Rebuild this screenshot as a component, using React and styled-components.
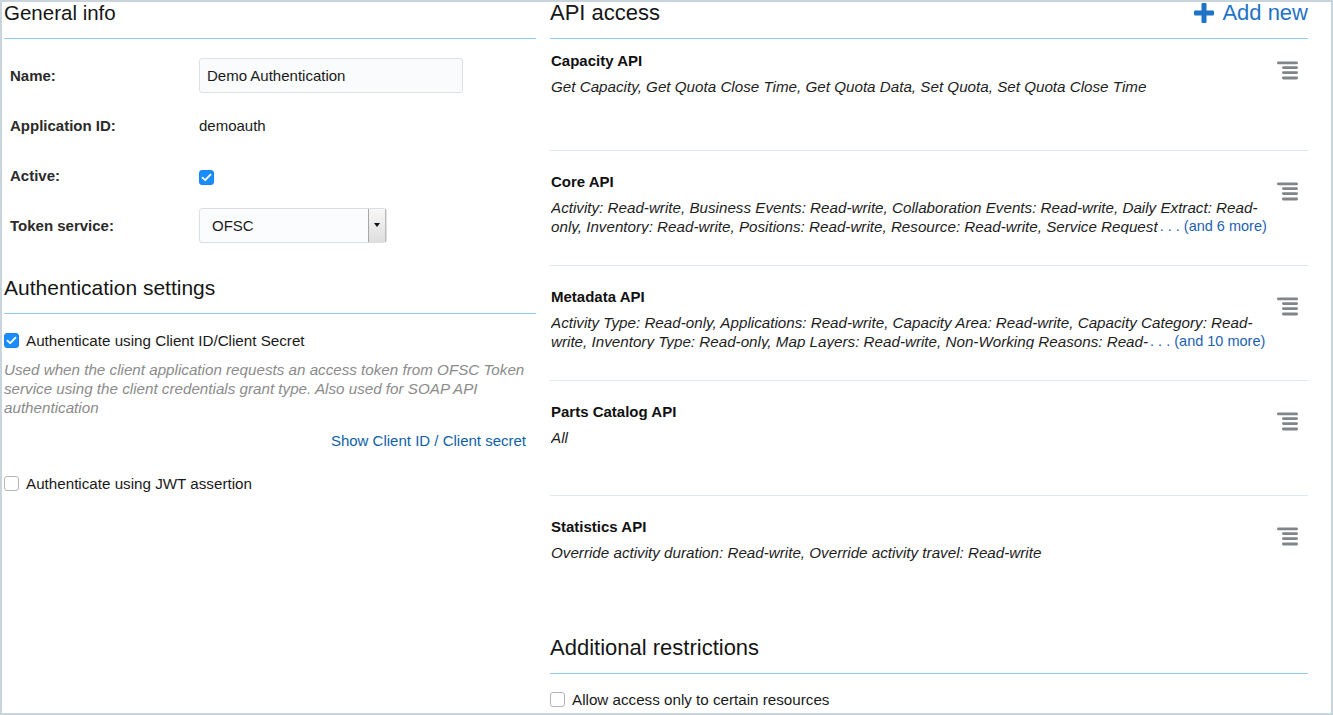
import React from 'react'
import styled, { createGlobalStyle } from 'styled-components'

const GlobalStyle = createGlobalStyle`
  body {
    margin: 0;
    background: #fff;
    font-family: "Liberation Sans", Arial, sans-serif;
    color: #1a1a1a;
  }
`

const apis = [
  {
    title: 'Capacity API',
    lines: ['Get Capacity, Get Quota Close Time, Get Quota Data, Set Quota, Set Quota Close Time'],
  },
  {
    title: 'Core API',
    lines: [
      'Activity: Read-write, Business Events: Read-write, Collaboration Events: Read-write, Daily Extract: Read-',
      'only, Inventory: Read-write, Positions: Read-write, Resource: Read-write, Service Request',
    ],
    more: 6,
  },
  {
    title: 'Metadata API',
    lines: [
      'Activity Type: Read-only, Applications: Read-write, Capacity Area: Read-write, Capacity Category: Read-',
      'write, Inventory Type: Read-only, Map Layers: Read-write, Non-Working Reasons: Read-',
    ],
    more: 10,
  },
  { title: 'Parts Catalog API', lines: ['All'] },
  {
    title: 'Statistics API',
    lines: ['Override activity duration: Read-write, Override activity travel: Read-write'],
  },
]

const CheckIcon = () => (
  <svg width="11" height="9" viewBox="0 0 11 9">
    <path d="M1.5 4.6 L4.2 7.2 L9.5 1.6" fill="none" stroke="#fff" strokeWidth="1.8" strokeLinecap="round" strokeLinejoin="round" />
  </svg>
)

const MenuIcon = () => (
  <svg width="21" height="19" viewBox="0 0 21 19">
    <rect x="0" y="0.5" width="21" height="2.8" rx="1.4" fill="#7f8589" />
    <rect x="5" y="5.2" width="16" height="2.8" rx="1.4" fill="#7f8589" />
    <rect x="5" y="10.2" width="16" height="2.8" rx="1.4" fill="#7f8589" />
    <rect x="5" y="15.4" width="16" height="3" rx="1.4" fill="#7f8589" />
  </svg>
)

const PlusIcon = () => (
  <svg width="20" height="20" viewBox="0 0 20 20">
    <rect x="7.5" y="0" width="5" height="20" rx="1" fill="#1f73c6" />
    <rect x="0" y="7.5" width="20" height="5" rx="1" fill="#1f73c6" />
  </svg>
)

const App = () => {
  return (
    <Frame>
      <GlobalStyle />
      <LeftCol>
        <SectionHeader>
          <SectionTitle $size="20.5px">General info</SectionTitle>
        </SectionHeader>
        <FormGrid>
          <Label>Name:</Label>
          <TextInput readOnly value="Demo Authentication" />
          <Label>Application ID:</Label>
          <Value>demoauth</Value>
          <Label>Active:</Label>
          <div>
            <Checkbox $checked $offset="6px"><CheckIcon /></Checkbox>
          </div>
          <Label>Token service:</Label>
          <Select>
            <SelectText>OFSC</SelectText>
            <SelectButton><Caret /></SelectButton>
          </Select>
        </FormGrid>

        <SectionHeader $top="27px">
          <SectionTitle $size="21px">Authentication settings</SectionTitle>
        </SectionHeader>
        <CheckRow $top="16px">
          <Checkbox $checked><CheckIcon /></Checkbox>
          Authenticate using Client ID/Client Secret
        </CheckRow>
        <Hint>
          Used when the client application requests an access token from OFSC Token
          service using the client credentials grant type. Also used for SOAP API
          authentication
        </Hint>
        <LinkRow>
          <Link>Show Client ID / Client secret</Link>
        </LinkRow>
        <CheckRow $top="22px">
          <Checkbox />
          Authenticate using JWT assertion
        </CheckRow>
      </LeftCol>

      <RightCol>
        <SectionHeader>
          <SectionTitle $size="22px">API access</SectionTitle>
          <AddNew>
            <PlusIcon />
            Add new
          </AddNew>
        </SectionHeader>
        <CardList>
          {apis.map(api => (
            <Card key={api.title}>
              <CardBody>
                <CardTitle>{api.title}</CardTitle>
                <Desc>
                  {api.lines.map((line, i) =>
                    api.more && i === api.lines.length - 1 ? (
                      <DescLine key={i}>
                        <Clipped>{line}</Clipped>
                        <More>. . . (and {api.more} more)</More>
                      </DescLine>
                    ) : (
                      <DescLine key={i}>{line}</DescLine>
                    )
                  )}
                </Desc>
              </CardBody>
              <MenuButton><MenuIcon /></MenuButton>
            </Card>
          ))}
        </CardList>

        <SectionHeader $top="26px">
          <SectionTitle $size="22px">Additional restrictions</SectionTitle>
        </SectionHeader>
        <CheckRow $top="15px" $size="15.2px">
          <Checkbox />
          Allow access only to certain resources
        </CheckRow>
      </RightCol>
    </Frame>
  )
}

const Frame = styled.div`
  width: 1333px;
  height: 715px;
  box-sizing: border-box;
  border: 2px solid #c8d5dd;
  padding: 0 23px 0 2px;
  display: flex;
  gap: 14px;
  overflow: hidden;
  background: #fff;
`

const LeftCol = styled.div`
  width: 532px;
  flex: none;
  display: flex;
  flex-direction: column;
`

const RightCol = styled.div`
  flex: 1;
  min-width: 0;
  display: flex;
  flex-direction: column;
`

const SectionHeader = styled.div`
  display: flex;
  justify-content: space-between;
  align-items: flex-start;
  height: 37px;
  box-sizing: border-box;
  border-bottom: 1px solid #8fcbf3;
  margin-top: ${p => p.$top || '0'};
  flex: none;
`

const SectionTitle = styled.h2`
  margin: 0;
  font-size: ${p => p.$size};
  font-weight: 400;
  line-height: 20px;
  color: #161616;
  padding-top: 1px;
`

const AddNew = styled.div`
  display: flex;
  align-items: center;
  gap: 8px;
  color: #1f73c6;
  font-size: 22px;
  line-height: 22px;
  cursor: pointer;
`

const FormGrid = styled.div`
  display: grid;
  grid-template-columns: 189px 1fr;
  grid-auto-rows: 50px;
  align-items: center;
  padding: 11px 0 0 6px;
`

const Label = styled.div`
  font-size: 15px;
  font-weight: 700;
  color: #2b2b2b;
`

const Value = styled.div`
  font-size: 15px;
  color: #1a1a1a;
`

const TextInput = styled.input`
  width: 264px;
  height: 35px;
  box-sizing: border-box;
  border: 1px solid #dce2e6;
  border-radius: 3px;
  background: #f9fbfc;
  padding: 0 7px;
  font-family: inherit;
  font-size: 15px;
  color: #1a1a1a;
  outline: none;
`

const Select = styled.div`
  width: 188px;
  height: 35px;
  box-sizing: border-box;
  border: 1px solid #d9dfe3;
  border-radius: 3px;
  background: #fafcfd;
  display: flex;
`

const SelectText = styled.div`
  flex: 1;
  padding-left: 12px;
  line-height: 33px;
  font-size: 15px;
  color: #1a1a1a;
`

const SelectButton = styled.div`
  width: 16px;
  border-left: 1px solid #a6a6a6;
  border-right: 1px solid #bdbdbd;
  background: linear-gradient(#f7f7f7, #dedede);
  display: flex;
  align-items: center;
  justify-content: center;
`

const Caret = styled.span`
  width: 0;
  height: 0;
  border-left: 3.5px solid transparent;
  border-right: 3.5px solid transparent;
  border-top: 4px solid #111;
`

const Checkbox = styled.span`
  width: 15px;
  height: 15px;
  box-sizing: border-box;
  flex: none;
  border-radius: 3px;
  display: inline-flex;
  align-items: center;
  justify-content: center;
  margin-top: ${p => p.$offset || '0'};
  background: ${p => (p.$checked ? '#1b8cfb' : '#fff')};
  border: 1px solid ${p => (p.$checked ? '#1a84ee' : '#b4b4b4')};
`

const CheckRow = styled.div`
  display: flex;
  align-items: center;
  gap: 7px;
  height: 20px;
  font-size: ${p => p.$size || '15.2px'};
  color: #1a1a1a;
  margin-top: ${p => p.$top || '0'};
`

const Hint = styled.div`
  margin-top: 10px;
  font-size: 15.2px;
  font-style: italic;
  line-height: 19px;
  color: #8b8b8b;
`

const LinkRow = styled.div`
  margin-top: 14px;
  padding-right: 10px;
  text-align: right;
  line-height: 20px;
`

const Link = styled.a`
  color: #105fa9;
  font-size: 15px;
  cursor: pointer;
`

const CardList = styled.div`
  display: flex;
  flex-direction: column;
`

const Card = styled.div`
  display: flex;
  justify-content: space-between;
  height: 115px;
  box-sizing: border-box;
  padding: 22px 10px 0 0;
  border-bottom: 1px solid #dbe9f4;

  &:first-child {
    height: 112px;
    padding-top: 13px;
  }

  &:last-child {
    border-bottom: none;
  }
`

const CardBody = styled.div`
  width: 720px;
  min-width: 0;
  padding-left: 1px;
`

const CardTitle = styled.div`
  font-size: 15px;
  font-weight: 700;
  line-height: 18px;
  color: #111;
`

const Desc = styled.div`
  margin-top: 7px;
  font-size: 15.2px;
  font-style: italic;
  line-height: 19px;
  color: #1e1e1e;
`

const DescLine = styled.div`
  display: flex;
  white-space: nowrap;
  overflow: hidden;
  height: 19px;
`

const Clipped = styled.span`
  flex: 0 1 auto;
  min-width: 0;
  overflow: hidden;
  height: 17px;
`

const More = styled.span`
  flex: none;
  margin-left: 2px;
  font-style: normal;
  font-size: 14.5px;
  color: #1d5fb0;
  cursor: pointer;
`

const MenuButton = styled.div`
  margin-top: 9px;
  height: 19px;
  cursor: pointer;
`

export default App
